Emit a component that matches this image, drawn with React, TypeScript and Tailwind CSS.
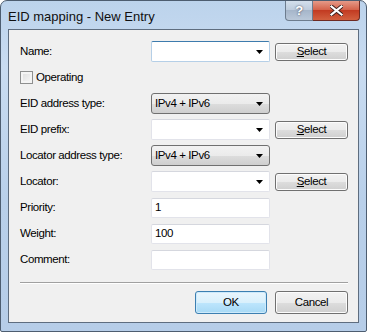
import React from "react";

const font = { fontFamily: '"Liberation Sans", Arial, sans-serif' };

function Arrow() {
  return (
    <svg width="7" height="4" viewBox="0 0 7 4" className="shrink-0">
      <path d="M0 0H7L3.5 4Z" fill="#000" />
    </svg>
  );
}

function Combo({ focused = false }: { focused?: boolean }) {
  return (
    <div
      className={`w-[119px] h-[21px] bg-white rounded-[2px] border flex items-center justify-end pr-[6px] ${
        focused
          ? "border-[#b5cfe7] border-t-[#3d7bad]"
          : "border-[#e2e3ea] border-t-[#d5d7de]"
      }`}
    >
      <Arrow />
    </div>
  );
}

function DropList({ value }: { value: string }) {
  return (
    <div className="w-[119px] h-[21px] rounded-[3px] border border-[#707070] bg-[linear-gradient(#f2f2f2_0%,#ebebeb_50%,#dddddd_50%,#cfcfcf_100%)] flex items-center justify-between pl-[3px] pr-[6px]">
      <span>{value}</span>
      <Arrow />
    </div>
  );
}

function TextBox({ value = "" }: { value?: string }) {
  return (
    <div className="w-[119px] h-[20px] bg-white rounded-[2px] border border-[#e2e3ea] border-t-[#d5d7de] flex items-center pl-[3px]">
      {value}
    </div>
  );
}

function Btn({ children, primary = false, w = "w-[73px]", h = "h-[18px]" }: { children: React.ReactNode; primary?: boolean; w?: string; h?: string }) {
  return (
    <div
      className={`${w} ${h} rounded-[3px] border flex items-center justify-center ${
        primary
          ? "border-[#3c7fb1] bg-[linear-gradient(#eaf6fd_0%,#d9f0fc_50%,#bee6fd_50%,#a7d9f5_100%)] shadow-[inset_0_0_0_1px_#cdeafb]"
          : "border-[#707070] bg-[linear-gradient(#f2f2f2_0%,#ebebeb_50%,#dddddd_50%,#cfcfcf_100%)] shadow-[inset_0_0_0_1px_#fcfcfc]"
      }`}
    >
      {children}
    </div>
  );
}

const SelectBtn = () => (
  <Btn>
    <span>
      <span className="underline">S</span>elect
    </span>
  </Btn>
);

function Row({ label, children }: { label: string; children: React.ReactNode }) {
  return (
    <div className="h-[21px] flex items-center">
      <div className="w-[131px]">{label}</div>
      {children}
    </div>
  );
}

export default function App() {
  return (
    <div
      style={font}
      className="w-[367px] h-[332px] text-[11.5px] tracking-[-0.4px] text-black rounded-t-[7px] rounded-b-[2px] border border-[#4d5d70] bg-[linear-gradient(180deg,#bcd3ec_0%,#c9dcf1_20%,#b9d0ea_60%,#b6cde8_100%)] flex flex-col overflow-hidden"
    >
      {/* Title bar */}
      <div className="h-[28px] flex items-start justify-between">
        <div className="pl-[7px] pt-[6px] text-[13px] tracking-[0px] text-[#101010]">EID mapping - New Entry</div>
        <div className="flex mr-[6px]">
          <div className="w-[28px] h-[20px] rounded-bl-[4px] border border-t-0 border-[#6d7c8e] bg-[linear-gradient(#d3dfec_0%,#bccadb_50%,#a6b6ca_50%,#bac8d9_100%)] flex items-center justify-center text-white text-[13px] font-bold [text-shadow:0_0_2px_#334]">
            ?
          </div>
          <div className="w-[47px] h-[20px] rounded-br-[4px] border border-l-0 border-t-0 border-[#6e2a22] bg-[linear-gradient(#e59a88_0%,#d5644c_45%,#c23b22_50%,#d2603f_100%)] flex items-center justify-center">
            <svg width="13" height="11" viewBox="0 0 13 11">
              <path d="M1.5 1.5L11.5 9.5M11.5 1.5L1.5 9.5" stroke="#3b1e1a" strokeWidth="4" strokeLinecap="square" />
              <path d="M1.5 1.5L11.5 9.5M11.5 1.5L1.5 9.5" stroke="#fff" strokeWidth="2.2" strokeLinecap="square" />
            </svg>
          </div>
        </div>
      </div>

      {/* Client area */}
      <div className="mx-[7px] flex-1 border border-[#5e6d7f] bg-[#f0f0f0] flex flex-col pt-[11px] pl-[11px] pr-[10px]">
        <div className="flex flex-col gap-[5px]">
          <Row label="Name:">
            <Combo focused />
            <div className="ml-[5px]">
              <SelectBtn />
            </div>
          </Row>
          <div className="h-[21px] flex items-center gap-[3px]">
            <div className="w-[13px] h-[13px] border border-[#8e8f8f] bg-[linear-gradient(135deg,#dcdcdc,#f8f8f8)] shadow-[inset_0_0_0_2px_#f4f4f4]" />
            <span>Operating</span>
          </div>
          <Row label="EID address type:">
            <DropList value="IPv4 + IPv6" />
          </Row>
          <Row label="EID prefix:">
            <Combo />
            <div className="ml-[5px]">
              <SelectBtn />
            </div>
          </Row>
          <Row label="Locator address type:">
            <DropList value="IPv4 + IPv6" />
          </Row>
          <Row label="Locator:">
            <Combo />
            <div className="ml-[5px]">
              <SelectBtn />
            </div>
          </Row>
          <Row label="Priority:">
            <TextBox value="1" />
          </Row>
          <Row label="Weight:">
            <TextBox value="100" />
          </Row>
          <Row label="Comment:">
            <TextBox />
          </Row>
        </div>
        <div className="mt-[12px] h-px bg-[#a0a0a0] border-b border-b-white box-content" />
        <div className="mt-[7px] flex justify-end gap-[8px]">
          <Btn primary w="w-[72px]" h="h-[23px]">OK</Btn>
          <Btn w="w-[73px]" h="h-[23px]">Cancel</Btn>
        </div>
      </div>
      <div className="h-[8px]" />
    </div>
  );
}
